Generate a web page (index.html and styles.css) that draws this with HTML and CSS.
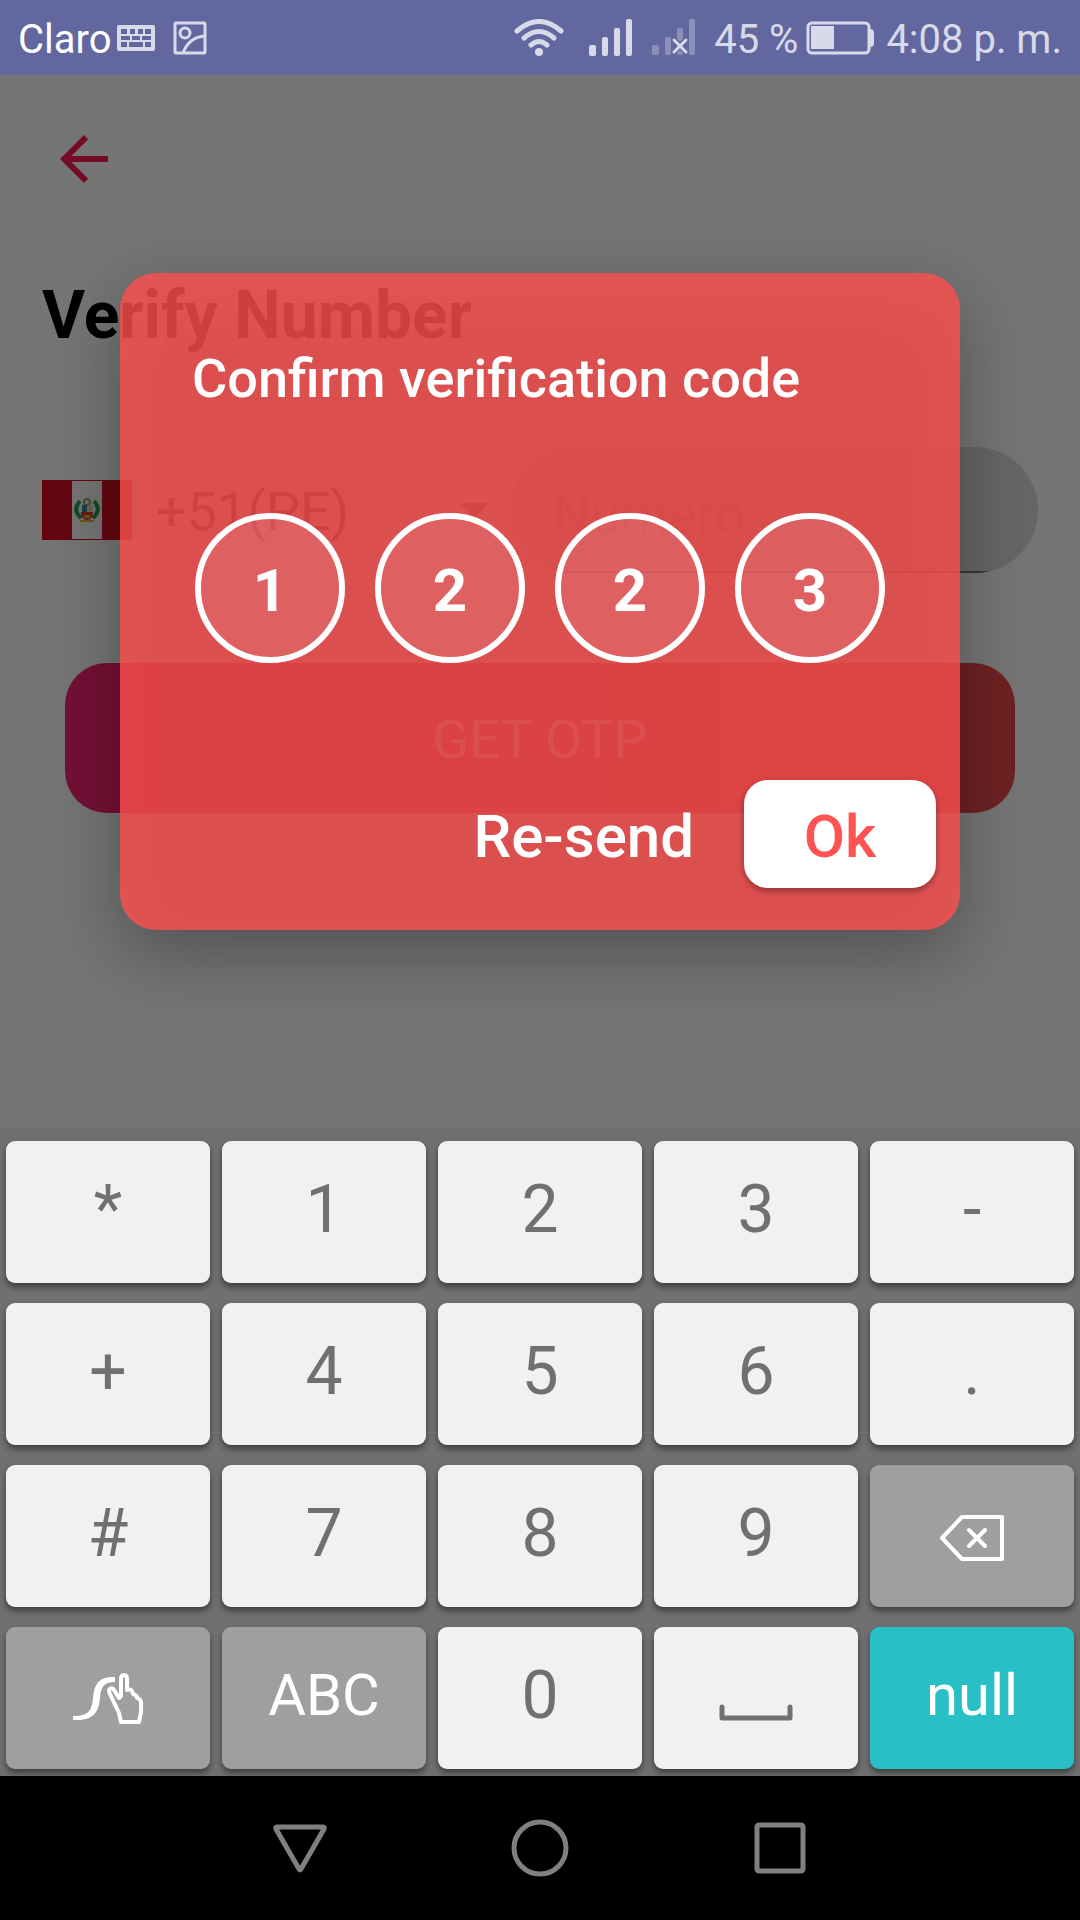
FILE: index.html
```html
<!DOCTYPE html>
<html lang="en">
<head>
<meta charset="utf-8">
<meta name="viewport" content="width=device-width, initial-scale=1">
<title>Verify Number</title>
<link rel="stylesheet" href="styles.css">
</head>
<body>
<header class="status-bar">
  <span class="carrier">Claro</span>
  <svg class="icon-keyboard" width="38" height="28" viewBox="0 0 38 28" aria-hidden="true">
    <path fill="currentColor" fill-rule="evenodd" d="M2 1h34q2 0 2 2v22q0 2-2 2H2q-2 0-2-2V3q0-2 2-2zM4 5v5h6V5zM13 5v5h5V5zM21 5v5h5V5zM28 5v5h6V5zM4 12v4h9v-4zM15 12v4h8v-4zM25 12v4h9v-4zM4 18v5h6v-5zM12 18v5h14v-5zM28 18v5h6v-5z"/>
  </svg>
  <svg class="icon-picture" width="34" height="34" viewBox="0 0 34 34" fill="none" stroke="currentColor" stroke-width="3" aria-hidden="true">
    <rect x="2" y="2" width="30" height="30" rx="1"/>
    <circle cx="12" cy="12" r="5"/>
    <path d="M10 32Q16 16 32 15"/>
  </svg>
  <svg class="icon-wifi" width="50" height="38" viewBox="0 0 50 38" fill="none" stroke="currentColor" stroke-width="5" stroke-linecap="round" aria-hidden="true">
    <path d="M3 12Q25-7 47 12M10 19Q25 6 40 19M17 26Q25 19 33 26"/>
    <circle cx="25" cy="33" r="4" fill="currentColor" stroke="none"/>
  </svg>
  <svg class="icon-signal" width="44" height="38" viewBox="0 0 44 38" fill="currentColor" aria-hidden="true">
    <rect x="0" y="26" width="7" height="11" rx="2"/><rect x="13" y="18" width="6" height="19" rx="2"/><rect x="25" y="9" width="6" height="28" rx="2"/><rect x="37" y="0" width="6" height="37" rx="2"/>
  </svg>
  <svg class="icon-signal-off" width="44" height="38" viewBox="0 0 44 38" aria-hidden="true">
    <g fill="currentColor" opacity=".35"><rect x="0" y="26" width="7" height="10" rx="2"/><rect x="13" y="18" width="6" height="18" rx="2"/><path d="M25 11q0-2 2-2h2q2 0 2 2v9l-3 3-3-3z"/><path d="M28 31l3 3q0 2-2 2h-2q-2 0-2-2z"/><rect x="37" y="0" width="6" height="36" rx="2"/></g>
    <path d="M22 21l12 12M34 21l-12 12" fill="none" stroke="currentColor" stroke-width="3" stroke-linecap="round"/>
  </svg>
  <span class="battery-level">45 %</span>
  <svg class="icon-battery" width="68" height="34" viewBox="0 0 68 34" aria-hidden="true">
    <rect x="2" y="2" width="61" height="30" rx="4" fill="none" stroke="currentColor" stroke-width="3"/>
    <path fill="currentColor" d="M5 5h23v23H5zM64 8q4 0 4 4v10q0 4-4 4z"/>
  </svg>
  <time class="clock">4:08 p. m.</time>
</header>

<main class="screen">
  <form class="verify-form">
    <button class="back" type="button" aria-label="Back">
      <svg width="72" height="72" viewBox="0 0 24 24" fill="currentColor"><path d="M20 11H7.83l5.59-5.59L12 4l-8 8 8 8 1.41-1.41L7.83 13H20v-2z"/></svg>
    </button>
    <h1 class="title">Verify Number</h1>
    <div class="phone-row">
      <div class="country">
        <svg class="flag" width="90" height="60" viewBox="0 0 90 60" role="img" aria-label="Peru">
          <path fill="#fff" d="M0 0h90v60H0z"/>
          <path fill="#d91023" d="M0 0h30v60H0zM60 0h30v60H60zM30 0h30v1H30zM30 59h30v1H30z"/>
          <path d="M38 21q-8 9 1 17M52 21q8 9-1 17" fill="none" stroke="#2aa052" stroke-width="4"/>
          <circle cx="45" cy="22" r="3" fill="none" stroke="#8fae62" stroke-width="2"/>
          <path fill="#3c87a8" d="M40 25h5v7h-5z"/><path fill="#e6e2b4" d="M45 25h6v7h-6z"/>
          <path fill="#e0402b" d="M39 32h12q0 8-6 8t-6-8z"/><path fill="#e8b830" d="M42 35h6v3h-6zM38 40h14v2H38z"/>
        </svg>
        <select class="country-code" aria-label="Country code"><option>+51(PE)</option></select>
        <svg class="caret" width="30" height="15" viewBox="0 0 30 15" aria-hidden="true"><path fill="currentColor" d="M0 0h30L15 15z"/></svg>
      </div>
      <input class="phone-number" type="tel" placeholder="Numero" aria-label="Numero">
    </div>
    <button class="get-otp" type="button">GET OTP</button>
  </form>
  <div class="scrim">
    <section class="dialog" role="dialog" aria-labelledby="dialog-title">
      <div class="panel">
        <h2 class="dialog-title" id="dialog-title">Confirm verification code</h2>
        <div class="code">
          <input class="digit" type="text" inputmode="numeric" maxlength="1" value="1" aria-label="Digit 1">
          <input class="digit" type="text" inputmode="numeric" maxlength="1" value="2" aria-label="Digit 2">
          <input class="digit" type="text" inputmode="numeric" maxlength="1" value="2" aria-label="Digit 3">
          <input class="digit" type="text" inputmode="numeric" maxlength="1" value="3" aria-label="Digit 4">
        </div>
        <div class="actions">
          <button class="resend" type="button">Re-send</button>
          <button class="ok" type="button">Ok</button>
        </div>
      </div>
    </section>
  </div>
</main>

<section class="keyboard" aria-label="Keyboard">
  <button class="key" type="button">*</button>
  <button class="key" type="button">1</button>
  <button class="key" type="button">2</button>
  <button class="key" type="button">3</button>
  <button class="key" type="button">-</button>
  <button class="key" type="button">+</button>
  <button class="key" type="button">4</button>
  <button class="key" type="button">5</button>
  <button class="key" type="button">6</button>
  <button class="key" type="button">.</button>
  <button class="key" type="button">#</button>
  <button class="key" type="button">7</button>
  <button class="key" type="button">8</button>
  <button class="key" type="button">9</button>
  <button class="key key-function" type="button" aria-label="Delete">
    <svg width="72" height="60" viewBox="0 0 72 60" fill="none" stroke="currentColor" stroke-width="4" stroke-linejoin="round" stroke-linecap="round"><path d="M6 35L26 14h40v42H26z"/><path d="M33 27l16 16M49 27L33 43"/></svg>
  </button>
  <button class="key key-function" type="button" aria-label="Gesture typing">
    <svg width="72" height="60" viewBox="0 0 72 60" fill="none" stroke="currentColor" stroke-linejoin="round"><path fill="currentColor" stroke="none" d="M43 12v5c-11 0-14 5-15 15-1 17-8 24-27 23v-4c15 0 19-5 20-18 1-16 8-22 22-21z"/><path stroke-width="4" d="M49 57l-2-9-9-19c-3-6 2-7 4-4l5 8 2-2V14q0-4 3-4t3 4v11q5-2 6 4 4 1 4 4 5 1 4 8v6l-2 10z"/></svg>
  </button>
  <button class="key key-function key-word" type="button">ABC</button>
  <button class="key" type="button">0</button>
  <button class="key" type="button" aria-label="Space">
    <svg width="74" height="60" viewBox="0 0 74 60" fill="none" stroke="currentColor" stroke-width="5" stroke-linejoin="round" stroke-linecap="round"><path d="M3 42v11h68V42"/></svg>
  </button>
  <button class="key key-enter key-word" type="button">null</button>
</section>

<nav class="nav-bar" aria-label="System">
  <button class="nav-button" type="button" aria-label="Back"><svg width="60" height="60" viewBox="0 0 60 60"><path d="M7 9h46q2 0 1 2L31 51q-1 2-2 0L6 11q-1-2 1-2z"/></svg></button>
  <button class="nav-button" type="button" aria-label="Home"><svg width="60" height="60" viewBox="0 0 60 60"><circle cx="30" cy="30" r="26"/></svg></button>
  <button class="nav-button" type="button" aria-label="Recent apps"><svg width="60" height="60" viewBox="0 0 60 60"><rect x="7" y="7" width="46" height="46" rx="2"/></svg></button>
</nav>
</body>
</html>
```
FILE: styles.css
```css
* {
  box-sizing: border-box;
}

body {
  margin: 0;
  min-height: 100vh;
  display: flex;
  flex-direction: column;
  font-family: Roboto, "Liberation Sans", sans-serif;
  background: #000;
}

button,
input,
select {
  margin: 0;
  padding: 0;
  border: 0;
  font-family: inherit;
  background: none;
}

svg {
  display: block;
  flex: none;
}

/* Status bar */
.status-bar {
  display: flex;
  align-items: center;
  height: 75px;
  padding: 0 18px;
  font-size: 40px;
  line-height: 48px;
  white-space: nowrap;
  color: #d9dae9;
  background: #62689f;
}

.carrier,
.battery-level,
.clock {
  padding-top: 4px;
}

.carrier {
  margin-right: 5px;
  color: #fff;
}

.icon-picture {
  margin-left: 18px;
}

.icon-wifi {
  margin-left: auto;
}

.icon-signal {
  margin-left: 25px;
}

.icon-signal-off {
  margin: 0 18px 0 19px;
}

.icon-battery {
  margin: 0 12px 0 8px;
}

/* Verify screen */
.screen {
  position: relative;
  flex: 1;
  background: #fff;
}

.verify-form {
  padding: 48px 42px;
}

.back {
  display: block;
  margin-left: 6px;
  color: #ff1c53;
}

.title {
  margin: 81px 0 91px;
  font-size: 66px;
  line-height: 80px;
  font-weight: 700;
  color: #000;
}

.phone-row {
  display: flex;
  gap: 21px;
}

.country {
  flex: 1;
  display: flex;
  align-items: center;
  color: #757575;
}

.country-code {
  flex: 1;
  min-width: 0;
  margin-left: 24px;
  padding-top: 4px;
  appearance: none;
  font-size: 54px;
  line-height: 64px;
  color: #212121;
}

.phone-number {
  width: 53%;
  height: 126px;
  padding: 8px 42px 0;
  border-radius: 63px;
  font-size: 54px;
  color: #212121;
  background: linear-gradient(#777, #777) bottom / 100% 2px no-repeat #dedede;
}

.phone-number::placeholder {
  color: #b0b0b0;
  opacity: 1;
}

.get-otp {
  display: block;
  width: calc(100% - 46px);
  height: 150px;
  margin: 90px 23px 0;
  padding-top: 2px;
  border-radius: 42px;
  font-size: 54px;
  color: #fff;
  background: linear-gradient(90deg, #fc2376, #ef4b4b);
}

/* Dialog */
.scrim {
  position: absolute;
  inset: 0;
  display: flex;
  align-items: center;
  padding: 0 120px;
  background: rgba(0, 0, 0, 0.54);
}

.dialog {
  position: relative;
  flex: 1;
}

/* Separate layer, so the shadow also shows through the translucent panel */
.dialog::before {
  content: "";
  position: absolute;
  inset: 24px 0 -24px;
  border-radius: 36px;
  background: rgba(0, 0, 0, 0.3);
  filter: blur(36px);
}

.panel {
  position: relative;
  padding: 74px 24px 42px;
  border-radius: 36px;
  background: rgba(255, 79, 79, 0.8);
}

.dialog-title {
  margin: 0 0 102px 48px;
  font-size: 54px;
  line-height: 64px;
  font-weight: 500;
  color: #fff;
}

.code {
  display: flex;
  justify-content: center;
  gap: 30px;
}

.digit {
  width: 150px;
  height: 150px;
  padding-top: 4px;
  border: 6px solid #fff;
  border-radius: 50%;
  font-size: 60px;
  font-weight: 700;
  text-align: center;
  color: #fff;
  background: rgba(255, 255, 255, 0.1);
  background-clip: padding-box;
}

.actions {
  display: flex;
  justify-content: flex-end;
  gap: 50px;
  margin-top: 117px;
}

.resend,
.ok {
  height: 108px;
  padding-top: 4px;
  font-size: 60px;
  font-weight: 500;
  color: #fff;
}

.ok {
  width: 192px;
  border-radius: 24px;
  color: #ff5252;
  background: #fff;
  box-shadow: 0 3px 6px rgba(0, 0, 0, 0.35);
}

/* Keyboard */
.keyboard {
  display: grid;
  grid-template-columns: repeat(5, 1fr);
  gap: 20px 12px;
  padding: 13px 6px 7px;
  background: #707070;
}

.key {
  display: flex;
  justify-content: center;
  align-items: center;
  height: 142px;
  padding-bottom: 6px;
  border-radius: 9px;
  font-size: 66px;
  color: #707070;
  background: #f1f1f1;
  box-shadow: 0 4px 6px rgba(0, 0, 0, 0.45);
}

.key-function {
  color: #fff;
  background: #9f9f9f;
}

.key-enter {
  color: #fff;
  background: #29bfc7;
}

.key-word {
  font-size: 58px;
}

/* System navigation */
.nav-bar {
  display: flex;
  justify-content: center;
  align-items: center;
  gap: 180px;
  height: 144px;
  background: #000;
}

.nav-button svg {
  fill: none;
  stroke: #808080;
  stroke-width: 5;
}
```
